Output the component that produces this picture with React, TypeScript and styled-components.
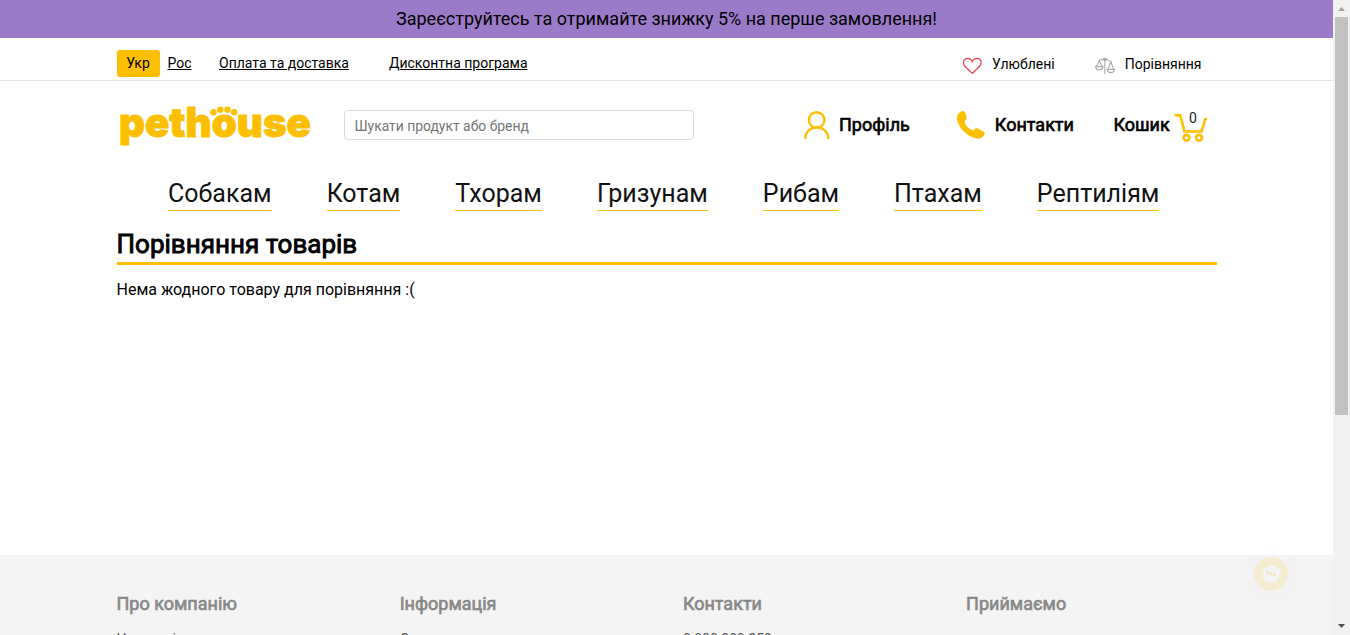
import React from "react";
import styled, { createGlobalStyle } from "styled-components";

const YELLOW = "#fdbf00";

const GlobalStyle = createGlobalStyle`
  * { box-sizing: border-box; }
  html, body { margin: 0; height: 635px; overflow: hidden; }
  body { font-family: Roboto, "Liberation Sans", sans-serif; font-weight: 400; color: #000; background: #fff; }
  a { color: inherit; text-decoration: none; }
  svg { display: block; flex: none; overflow: visible; }
`;

const Window = styled.div`
  display: flex;
  height: 635px;
  overflow: hidden;
`;

const Page = styled.div`
  flex: 1;
  display: flex;
  flex-direction: column;
  min-width: 0;
  overflow: hidden;
`;

const Banner = styled.div`
  flex: none;
  height: 38px;
  background: #9b7bc9;
  text-align: center;
  font-size: 18px;
  line-height: 38px;
`;

const Container = styled.div`
  width: 1100px;
  margin: 0 auto;
`;

const TopBar = styled.div`
  flex: none;
  height: 43px;
  border-bottom: 1px solid #e4e4e4;
`;

const TopRow = styled(Container)`
  display: flex;
  padding-top: 12px;
  font-size: 14px;
  line-height: 26px;
`;

const Language = styled.a<{ $active?: boolean }>`
  height: 27px;
  width: ${(p) => (p.$active ? "43px" : "24px")};
  margin-right: ${(p) => (p.$active ? "8px" : "27.5px")};
  text-align: center;
  border-radius: 3px;
  background: ${(p) => (p.$active ? YELLOW : "transparent")};
  text-decoration: ${(p) => (p.$active ? "none" : "underline")};
`;

const TopLink = styled.a`
  text-decoration: underline;
  margin-right: 40px;
`;

const TopTools = styled.div`
  display: flex;
  margin-left: auto;
  padding-right: 15px;
  gap: 40px;
`;

const Tool = styled.a`
  display: flex;
  gap: 10px;
  line-height: 28px;
  svg { margin-top: 7px; }
`;

const Header = styled(Container)`
  flex: none;
  display: flex;
  height: 88px;
`;

const Logo = styled.a`
  margin: 21px 0 0 2px;
  width: 225px;
`;

const Search = styled.input`
  width: 350px;
  height: 30px;
  margin-top: 29px;
  padding: 2px 10px 0;
  border: 1px solid #dcdcdc;
  border-radius: 4px;
  font: 13.9px Roboto, "Liberation Sans", sans-serif;
  outline: none;
  &::placeholder { color: #757575; }
`;

const HeaderLink = styled.a<{ $left: number; $gap: number }>`
  display: flex;
  align-items: flex-start;
  gap: ${(p) => p.$gap}px;
  margin-left: ${(p) => p.$left}px;
  padding-top: 29px;
  font-size: 18px;
  line-height: 30px;
  -webkit-text-stroke: 0.65px #000;
  white-space: nowrap;
  svg { -webkit-text-stroke: 0; }
`;

const Nav = styled(Container)`
  flex: none;
  display: flex;
  height: 60px;
  padding: 10px 0 0 51.5px;
  gap: 55px;
`;

const NavLink = styled.a`
  height: 32px;
  font-size: 25px;
  line-height: 30px;
  color: #111;
  border-bottom: 1px solid ${YELLOW};
`;

const Main = styled(Container)`
  flex: none;
  height: 326px;
`;

const Title = styled.h1`
  margin: 0;
  height: 36px;
  font-size: 26px;
  font-weight: 400;
  line-height: 30px;
  -webkit-text-stroke: 0.9px #000;
  border-bottom: 3px solid ${YELLOW};
`;

const Empty = styled.p`
  margin: 15px 0 0;
  font-size: 16px;
  line-height: 19px;
`;

const Footer = styled.footer`
  flex: none;
  height: 300px;
  background: #f4f4f4;
`;

const FooterRow = styled(Container)`
  display: flex;
  padding-top: 38px;
`;

const Column = styled.div`
  width: 283.2px;
  flex: none;
  color: #888;
`;

const ColumnTitle = styled.h2`
  margin: 0;
  font-size: 18px;
  font-weight: 400;
  line-height: 22px;
  -webkit-text-stroke: 0.65px #888;
`;

const ColumnLink = styled.a`
  display: block;
  margin-top: 14px;
  font-size: 14px;
  line-height: 20px;
  color: #555;
`;

const Chat = styled.button`
  position: fixed;
  left: 1254px;
  top: 557px;
  width: 34px;
  height: 34px;
  padding: 0;
  border: 0;
  border-radius: 50%;
  background: #f6ecd0;
  box-shadow: 0 0 0 11px rgba(0, 0, 0, 0.004);
`;

const Scrollbar = styled.div`
  flex: none;
  width: 17px;
  height: 635px;
  display: flex;
  flex-direction: column;
  align-items: center;
  justify-content: space-between;
  background: #f1f1f1;
`;

const Thumb = styled.div`
  width: 13px;
  height: 398px;
  margin-bottom: auto;
  background: #c1c1c1;
`;

const LogoMark = () => (
  <svg width="194" height="46" viewBox="0 0 194 46" fill={YELLOW}>
    <text x="0" y="35.2" fontFamily="Inter, sans-serif" fontWeight="900" fontSize="41" textLength="192" lengthAdjust="spacingAndGlyphs" stroke={YELLOW} strokeWidth="0.9">pethouse</text>
    <circle cx="94.5" cy="10.3" r="3.2" />
    <circle cx="101.3" cy="7.8" r="3.2" />
    <circle cx="108.5" cy="7.8" r="3.2" />
    <circle cx="115.2" cy="10.3" r="3.2" />
  </svg>
);

const Heart = () => (
  <svg width="20" height="18" viewBox="0 0 20 18" fill="none" stroke="#ef3f4a" strokeWidth="1.3">
    <path d="M10.3 16.4 2.600 9C-.3 5.400 2 1.400 5.600 1.400c2.400 0 4 1.400 4.700 3.200C11 2.800 12.600 1.400 15 1.400c3.600 0 5.700 4 2.900 7.600Z" />
  </svg>
);

const Scales = () => (
  <svg width="20" height="18" viewBox="0 0 20 18" fill="none" stroke="#aaa" strokeWidth="1.1">
    <path d="M3.5 3.2C6.5 3.2 7 1.9 10 1.9S14 4.6 17 4.8M9.8 3V17M4.3 3.4 1.5 9.4M4.3 3.4 7.1 9.4M.6 9.6h7.4c-.3 4.2-7.100 4.2-7.400 0ZM15.800 4.800l-2.800 7.200M15.800 4.800l2.800 7.200M12.200 12.400h7.300c-.4 4.300-6.900 4.300-7.300 0Z" />
    <circle cx="10" cy="2.5" r="1.3" fill="#aaa" />
  </svg>
);

const Person = () => (
  <svg width="26" height="30" viewBox="0 0 26 30" fill="none" stroke={YELLOW} strokeWidth="2.4">
    <circle cx="12.7" cy="10" r="7.8" />
    <path d="M1.2 29C1.2 13.5 24.3 13.5 24.3 29" />
  </svg>
);

const Phone = () => (
  <svg width="29" height="30" viewBox="0 0 29 30" fill={YELLOW}>
    <path d="M4 1.5C6.2.4 7.5.9 8.3 3l1.3 4.200c.4 1.600-.2 2.400-1.800 3.400-.8 4 4 9.300 8.800 9.700 1.500-2.400 2.700-2.500 4.400-1.700l5.300 2.800c1.800 1 2 2.200.7 4.100-2 3-5.300 3.800-9.300 2.500C9.500 25.600 2.700 19 .3 10.800-.7 6.800.7 3.200 4 1.500Z" />
  </svg>
);

const CartIcon = () => (
  <svg width="34" height="31" viewBox="0 0 34 31" fill="none" stroke={YELLOW} strokeWidth="2.6">
    <path d="M.5 5.2h5.7L10.5 21.5H27.5L31.2 9.2H33" />
    <circle cx="12.5" cy="27.8" r="2.9" />
    <circle cx="25" cy="27.8" r="2.9" />
    <text x="15" y="12.5" fill="#222" stroke="none" fontFamily="Roboto, sans-serif" fontSize="14">0</text>
  </svg>
);

const categories = ["Собакам", "Котам", "Тхорам", "Гризунам", "Рибам", "Птахам", "Рептиліям"];

const columns = [
  { title: "Про компанію", link: "Нам довіряють" },
  { title: "Інформація", link: "Оплата" },
  { title: "Контакти", link: "0 800 209 250" },
  { title: "Приймаємо", link: "" },
];

export default function App() {
  return (
    <Window>
      <GlobalStyle />
      <Page>
        <Banner>Зареєструйтесь та отримайте знижку 5% на перше замовлення!</Banner>
        <TopBar>
          <TopRow>
            <Language $active>Укр</Language>
            <Language>Рос</Language>
            <TopLink>Оплата та доставка</TopLink>
            <TopLink>Дисконтна програма</TopLink>
            <TopTools>
              <Tool><Heart />Улюблені</Tool>
              <Tool><Scales />Порівняння</Tool>
            </TopTools>
          </TopRow>
        </TopBar>
        <Header>
          <Logo><LogoMark /></Logo>
          <Search placeholder="Шукати продукт або бренд" />
          <HeaderLink $left={110} $gap={9.5}><Person />Профіль</HeaderLink>
          <HeaderLink $left={47.5} $gap={8.5}><Phone />Контакти</HeaderLink>
          <HeaderLink $left={39.5} $gap={4}>Кошик<CartIcon /></HeaderLink>
        </Header>
        <Nav>
          {categories.map((c) => <NavLink key={c}>{c}</NavLink>)}
        </Nav>
        <Main>
          <Title>Порівняння товарів</Title>
          <Empty>Нема жодного товару для порівняння :(</Empty>
        </Main>
        <Footer>
          <FooterRow>
            {columns.map((c) => (
              <Column key={c.title}>
                <ColumnTitle>{c.title}</ColumnTitle>
                {c.link && <ColumnLink>{c.link}</ColumnLink>}
              </Column>
            ))}
          </FooterRow>
        </Footer>
      </Page>
      <Scrollbar>
        <svg width="17" height="17" viewBox="0 0 17 17" fill="#a3a3a3"><path d="M5 11h7L8.5 7Z" /></svg>
        <Thumb />
        <svg width="17" height="17" viewBox="0 0 17 17" fill="#505050"><path d="M5 6h7L8.5 10Z" /></svg>
      </Scrollbar>
      <Chat>
        <svg width="34" height="34" viewBox="0 0 34 34">
          <path d="M17 8.5c2.500 0 4.500 1 6 3l5 1-2.500 4c.5 5-3.500 9-8.500 9s-8.500-4-8.500-8.500 4-8.500 8.500-8.500Z" fill="#f4f4f4" />
          <g fill="#f6e4b8"><circle cx="13.5" cy="15.5" r="1.5" /><circle cx="17" cy="16.5" r="1.5" /><circle cx="20.5" cy="17.5" r="1.5" /></g>
        </svg>
      </Chat>
    </Window>
  );
}
